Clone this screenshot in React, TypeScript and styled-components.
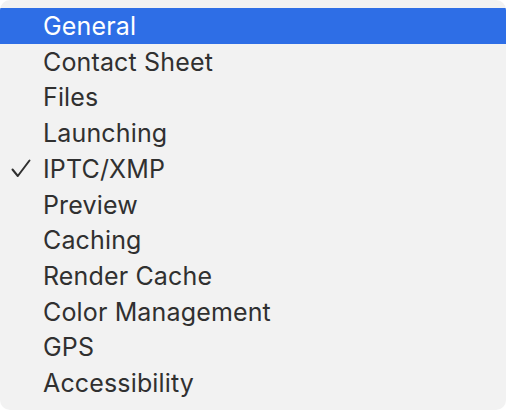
import styled, { createGlobalStyle } from "styled-components";

const GlobalStyle = createGlobalStyle`
  html, body {
    margin: 0;
    padding: 0;
    background: #ffffff;
  }
  body {
    font-family: Inter, "Noto Sans", "Liberation Sans", sans-serif;
    -webkit-font-smoothing: antialiased;
  }
`;

const Menu = styled.ul`
  list-style: none;
  margin: 0;
  width: 506px;
  height: 410px;
  box-sizing: border-box;
  padding: 8px 0 9px;
  background: #f2f2f2;
  border-radius: 10px;
  display: flex;
  flex-direction: column;
  overflow: hidden;
`;

const Item = styled.li<{ $active?: boolean }>`
  height: 35.75px;
  display: flex;
  align-items: center;
  position: relative;
  padding-left: 43px;
  font-size: 25px;
  letter-spacing: 0.15px;
  color: ${(p) => (p.$active ? "#ffffff" : "#303030")};
  background: ${(p) => (p.$active ? "#2e6ee6" : "transparent")};
`;

const Check = styled.svg`
  position: absolute;
  left: 11px;
  top: 50%;
  margin-top: -10px;
  width: 20px;
  height: 20px;
`;

const items = [
  "General",
  "Contact Sheet",
  "Files",
  "Launching",
  "IPTC/XMP",
  "Preview",
  "Caching",
  "Render Cache",
  "Color Management",
  "GPS",
  "Accessibility",
];

export default function App() {
  return (
    <>
      <GlobalStyle />
      <Menu>
        {items.map((label, i) => (
          <Item key={label} $active={i === 0}>
            {label === "IPTC/XMP" && (
              <Check viewBox="0 0 20 20">
                <path
                  d="M1.5 10.5 L6.8 17 L18.5 1.5"
                  fill="none"
                  stroke="#303030"
                  strokeWidth="2"
                  strokeLinecap="round"
                  strokeLinejoin="round"
                />
              </Check>
            )}
            {label}
          </Item>
        ))}
      </Menu>
    </>
  );
}
